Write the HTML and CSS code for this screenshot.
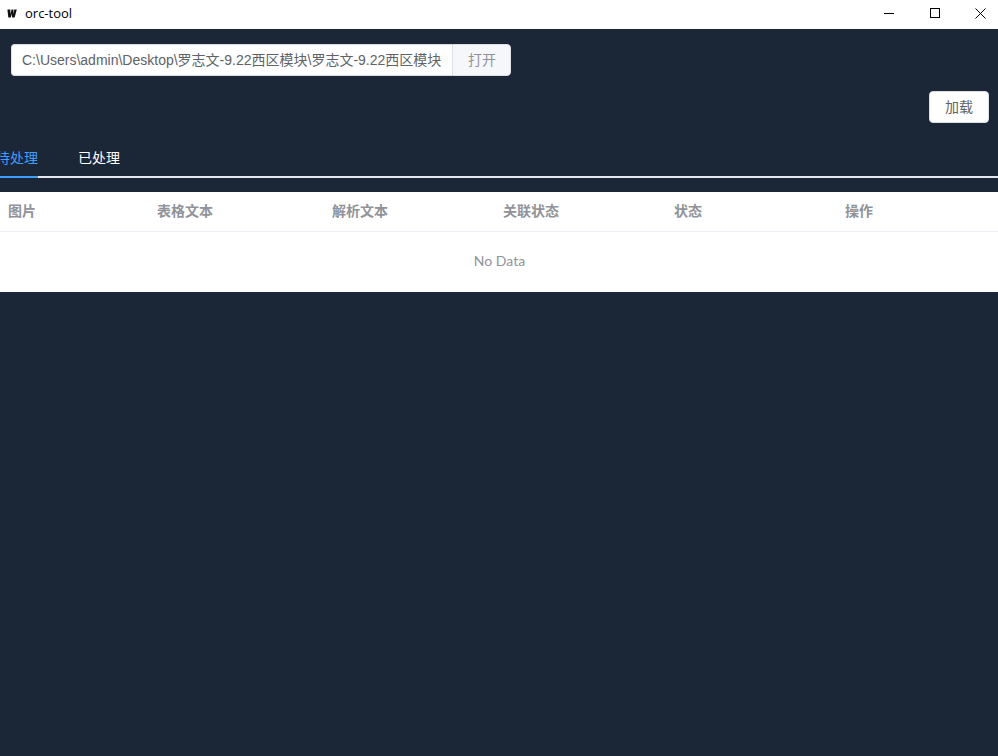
FILE: index.html
```html
<!DOCTYPE html>
<html lang="zh-CN">
<head>
<meta charset="utf-8">
<title>orc-tool</title>
<link rel="stylesheet" href="styles.css">
</head>
<body>
<header class="titlebar">
  <div class="brand">
    <svg class="logo" width="10" height="11" viewBox="0 0 10 10"><path d="M0.4 1H3.3L3.4 5.4L4.6 1H6.4L6.5 5.4L7.3 1H9.8L7.6 9H5.1L4.9 5.2L3.8 9H1.3Z" fill="#111"/></svg>
    <span class="app-name">orc-tool</span>
  </div>
  <div class="win-controls">
    <svg class="win-min" width="10" height="10" viewBox="0 0 10 10"><path d="M0 5.5H10" stroke="#000" fill="none"/></svg>
    <svg class="win-max" width="10" height="10" viewBox="0 0 10 10"><rect x="0.5" y="0.5" width="9" height="9" stroke="#000" fill="none"/></svg>
    <svg class="win-close" width="11" height="11" viewBox="0 0 11 11"><path d="M0.5 0.5L10.5 10.5M10.5 0.5L0.5 10.5" stroke="#000" fill="none"/></svg>
  </div>
</header>
<main class="content">
  <div class="path-row">
    <div class="input-group">
      <div class="path-input">C:\Users\admin\Desktop\罗志文-9.22西区模块\罗志文-9.22西区模块</div>
      <div class="append">打开</div>
    </div>
  </div>
  <div class="action-row"><button class="btn" type="button">加载</button></div>
  <nav class="tabs">
    <div class="tab-list">
      <div class="tab active">待处理</div>
      <div class="tab">已处理</div>
    </div>
  </nav>
  <section class="table">
    <div class="thead">
      <div>图片</div><div>表格文本</div><div>解析文本</div><div>关联状态</div><div>状态</div><div>操作</div>
    </div>
    <div class="empty">No Data</div>
  </section>
</main>
</body>
</html>
```
FILE: styles.css
```css
* { box-sizing: border-box; }
html, body { margin: 0; height: 100%; }
body {
  display: flex;
  flex-direction: column;
  height: 756px;
  overflow: hidden;
  background: #1b2637;
  font-family: "Liberation Sans", "Noto Sans CJK SC", sans-serif;
}
.titlebar {
  height: 29px;
  flex: none;
  background: #fff;
  display: flex;
  align-items: center;
  justify-content: space-between;
}
.brand { display: flex; align-items: center; padding-left: 7px; }
.logo { display: block; margin-right: 8px; margin-top: -3px; }
.app-name {
  font: 13px/16px "Open Sans", "Noto Sans", sans-serif;
  color: #000;
  margin-top: -3px;
}
.win-controls { display: flex; align-items: center; padding-right: 12px; margin-top: -3px; }
.win-controls svg { display: block; }
.win-min { margin-right: 36px; }
.win-max { margin-right: 35px; }
.content { flex: 1; min-height: 0; }
.path-row { padding: 15px 0 0 11px; height: 62px; }
.input-group { display: flex; width: 500px; height: 32px; }
.path-input {
  flex: 1;
  min-width: 0;
  background: #fff;
  border: 1px solid #dcdfe6;
  border-right: 0;
  border-radius: 4px 0 0 4px;
  padding: 0 10px;
  font-size: 14px;
  line-height: 30px;
  color: #606266;
  white-space: nowrap;
  overflow: hidden;
}
.append {
  flex: none;
  width: 59px;
  background: #f5f7fa;
  border: 1px solid #dcdfe6;
  border-radius: 0 4px 4px 0;
  padding-left: 1px;
  font-size: 14px;
  line-height: 30px;
  text-align: center;
  color: #909399;
}
.action-row { display: flex; justify-content: flex-end; padding-right: 9px; height: 32px; }
.btn {
  width: 60px;
  height: 32px;
  background: #fff;
  border: 1px solid #dcdfe6;
  border-radius: 4px;
  padding: 0 0 2px;
  font-family: inherit;
  font-size: 14px;
  color: #606266;
}
.tabs {
  margin-top: 21px;
  height: 34px;
  box-shadow: inset 0 -2px 0 #e4e7ed;
  overflow: hidden;
}
.tab-list { display: flex; margin-left: -4px; height: 34px; }
.tab {
  font-size: 14px;
  line-height: 14px;
  padding-top: 7px;
  color: #fff;
  margin-right: 40px;
  height: 34px;
}
.tab.active { color: #409eff; border-bottom: 2px solid #409eff; }
.table { margin-top: 14px; background: #fff; height: 100px; }
.thead {
  display: grid;
  grid-template-columns: 149px 175px 171px 171px 171px 161px;
  height: 40px;
  border-bottom: 1px solid #ebeef5;
  font-size: 14px;
  font-weight: 700;
  line-height: 39px;
  color: #909399;
}
.thead > div { padding-left: 8px; }
.empty {
  height: 60px;
  padding-left: 1px;
  text-align: center;
  font: 14px/58px Lato, "Noto Sans", sans-serif;
  color: #909399;
}
```
